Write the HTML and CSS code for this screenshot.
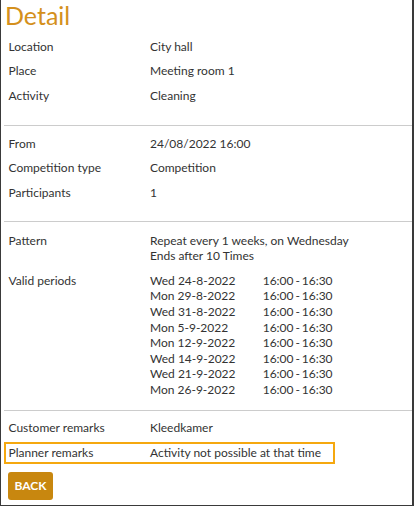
FILE: index.html
```html
<!DOCTYPE html>
<html>
<head>
<meta charset="utf-8">
<link rel="stylesheet" href="styles.css">
</head>
<body>
<div class="page">
  <h1 class="title">Detail</h1>
  <section class="section s1">
    <div class="row"><div class="label">Location</div><div class="value">City hall</div></div>
    <div class="row"><div class="label">Place</div><div class="value">Meeting room 1</div></div>
    <div class="row"><div class="label">Activity</div><div class="value">Cleaning</div></div>
  </section>
  <section class="section s2">
    <div class="row"><div class="label">From</div><div class="value">24/08/2022 16:00</div></div>
    <div class="row"><div class="label">Competition type</div><div class="value">Competition</div></div>
    <div class="row"><div class="label">Participants</div><div class="value">1</div></div>
  </section>
  <section class="section s3">
    <div class="row"><div class="label">Pattern</div><div class="value">Repeat every 1 weeks, on Wednesday<br>Ends after 10 Times</div></div>
    <div class="row"><div class="label">Valid periods</div>
      <div class="value periods">
        <span>Wed 24-8-2022</span><span class="time">16:00 - 16:30</span>
        <span>Mon 29-8-2022</span><span class="time">16:00 - 16:30</span>
        <span>Wed 31-8-2022</span><span class="time">16:00 - 16:30</span>
        <span>Mon 5-9-2022</span><span class="time">16:00 - 16:30</span>
        <span>Mon 12-9-2022</span><span class="time">16:00 - 16:30</span>
        <span>Wed 14-9-2022</span><span class="time">16:00 - 16:30</span>
        <span>Wed 21-9-2022</span><span class="time">16:00 - 16:30</span>
        <span>Mon 26-9-2022</span><span class="time">16:00 - 16:30</span>
      </div>
    </div>
  </section>
  <section class="section s4">
    <div class="row"><div class="label">Customer remarks</div><div class="value">Kleedkamer</div></div>
    <div class="row highlight"><div class="label">Planner remarks</div><div class="value">Activity not possible at that time</div></div>
    <button class="back">BACK</button>
  </section>
</div>
</body>
</html>
```
FILE: styles.css
```css
html, body {
  margin: 0;
  padding: 0;
  background: #fff;
}
body {
  font-family: Lato, "Open Sans", sans-serif;
  font-size: 12px;
  color: #333;
}
.page {
  box-sizing: border-box;
  width: 414px;
  height: 506px;
  border-left: 1px solid #3a3a3a;
  border-right: 2px solid #3a3a3a;
  border-bottom: 1px solid #3a3a3a;
  padding-left: 3px;
  overflow: hidden;
}
.title {
  margin: 0;
  padding-left: 1px;
  font-size: 25px;
  line-height: 30px;
  font-weight: 400;
  color: #d4901c;
}
.section {
  border-bottom: 1px solid #cccccc;
}
.section.s4 { border-bottom: none; }
.s1 { padding: 4px 0 17px; }
.s2 { padding: 5.5px 0 16px; }
.s3 { padding: 6px 0 7.5px; }
.s4 { padding: 5px 0 0; }
.row {
  display: flex;
  line-height: 15.6px;
  padding: 4.5px 0 4.5px 4.5px;
}
.label {
  width: 141.5px;
  flex: none;
}
.value { flex: none; }
.periods {
  display: grid;
  grid-template-columns: 112.7px auto;
}
.time { word-spacing: -1.2px; }
.highlight {
  width: fit-content;
  margin-top: 2px;
  padding: 1px 12px 1px 2.5px;
  border: 2px solid #f5a80f;
}
.back {
  display: block;
  margin: 8px 0 0 4px;
  width: 45px;
  height: 28px;
  padding: 0;
  border: none;
  border-radius: 3px;
  background: #c8870f;
  color: #fff;
  font-family: Lato, sans-serif;
  font-weight: 700;
  font-size: 12px;
}
```
